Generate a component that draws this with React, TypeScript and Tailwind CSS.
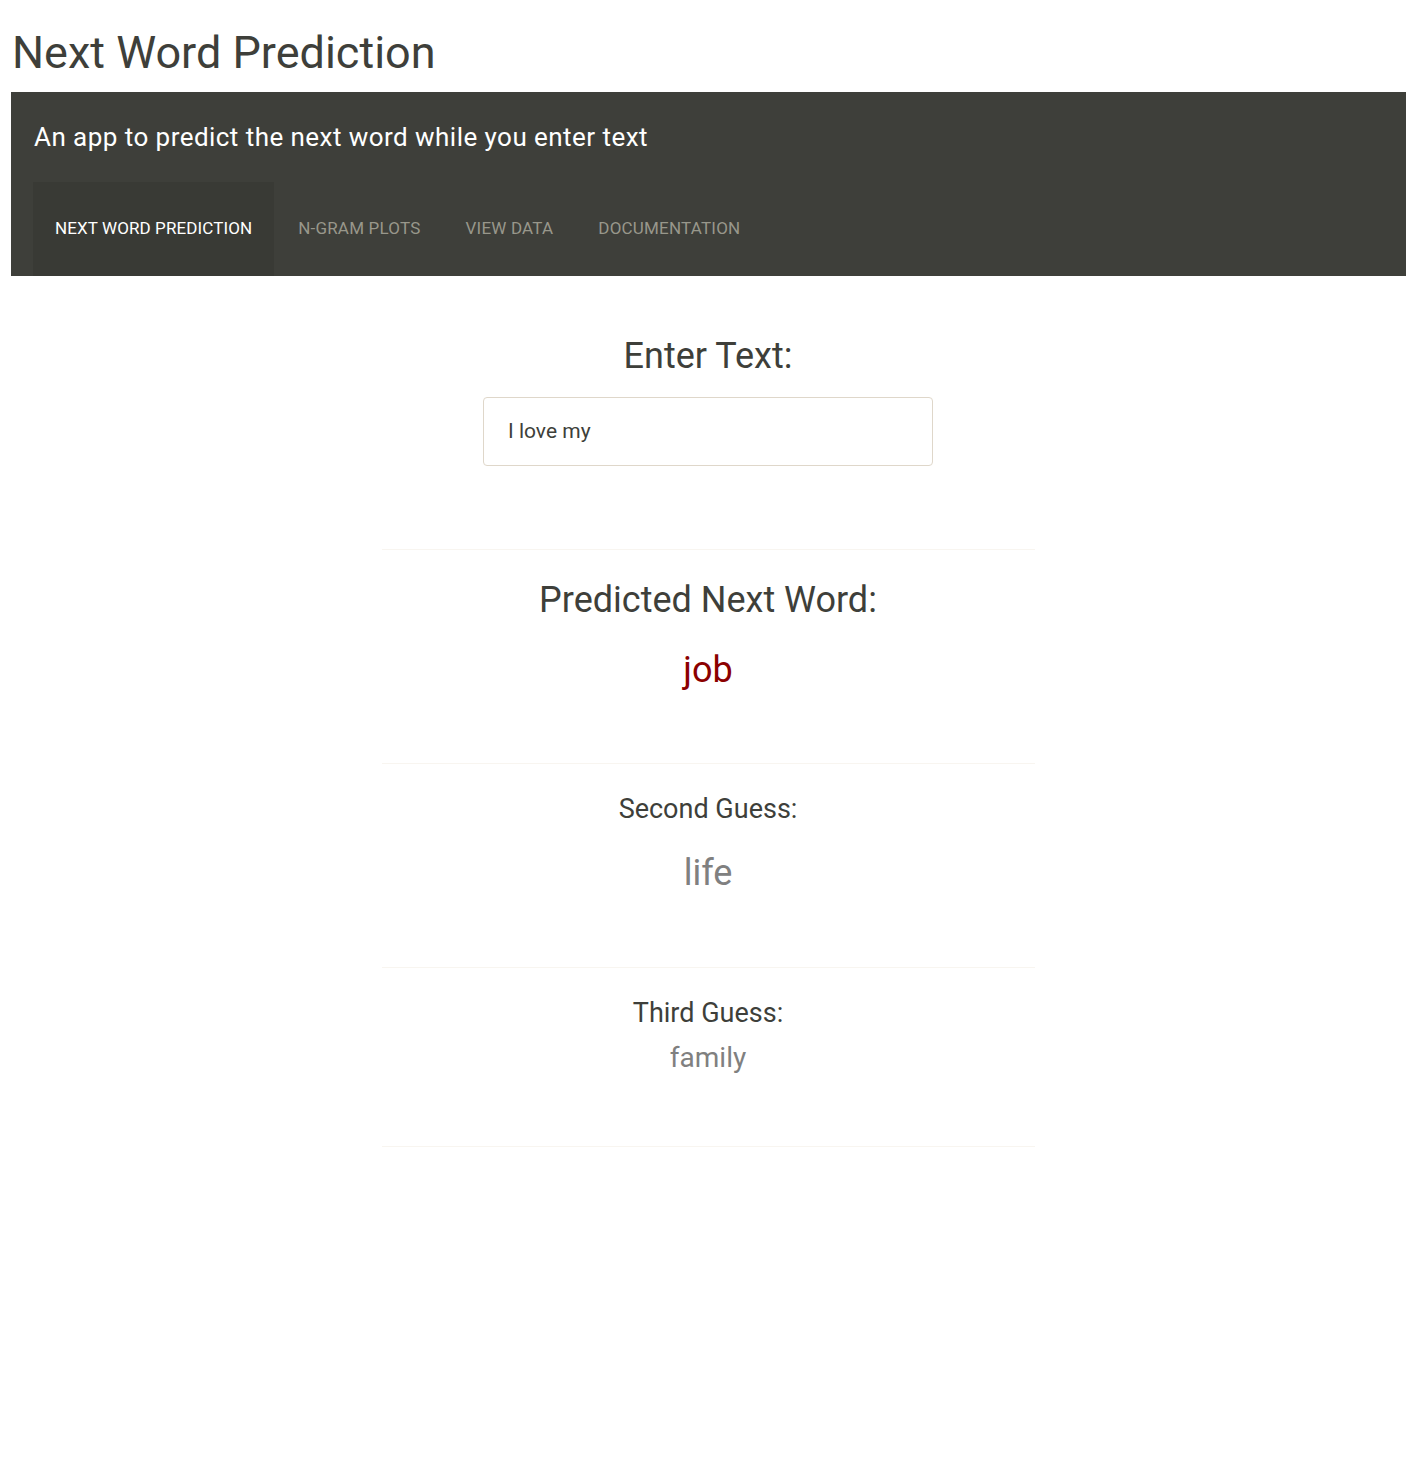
const tabs = ['NEXT WORD PREDICTION', 'N-GRAM PLOTS', 'VIEW DATA', 'DOCUMENTATION']

export default function App() {
  return (
    <div className="min-h-screen bg-white px-[11px] text-[#3e3f3a] [font-family:Roboto,'Liberation_Sans',sans-serif]">
      <h2 className="pt-[24px] pb-[10px] text-[45px] leading-[58px] pl-px">Next Word Prediction</h2>

      <div className="mr-[-1px] bg-[#3e3f3a] pl-[22px]">
        <p className="pt-[28px] pl-[1px] text-[26px] leading-[34px] tracking-[0.45px] text-white">
          An app to predict the next word while you enter text
        </p>
        <nav className="mt-[28px] flex">
          {tabs.map((t, i) => (
            <div
              key={t}
              className={
                i === 0
                  ? 'mr-[1.5px] flex h-[94px] items-center bg-[#393a35] px-[22px] text-[17px] tracking-[0.1px] text-white'
                  : 'flex h-[94px] items-center px-[22.5px] text-[17px] tracking-[0.2px] text-[#98978b]'
              }
            >
              {t}
            </div>
          ))}
        </nav>
      </div>

      <div className="mx-auto w-[653px] text-center">
        <h3 className="mt-[56px] text-[36px] leading-[48px]">Enter Text:</h3>
        <div className="mx-auto mt-[17px] flex h-[69px] w-[450px] items-center rounded-[4px] border border-[#dfd7ca] px-[24px] text-left text-[21px]">
          I love my
        </div>

        <hr className="mt-[83px] border-t border-[#f8f5f0]" />
        <h3 className="mt-[28px] text-[36px] leading-[44px]">Predicted Next Word:</h3>
        <p className="mt-[26px] text-[36px] leading-[44px] text-[#8b0000]">job</p>

        <hr className="mt-[71px] border-t border-[#f8f5f0]" />
        <h4 className="mt-[28px] text-[27px] leading-[34px]">Second Guess:</h4>
        <p className="mt-[25px] text-[36px] leading-[44px] text-[#808080]">life</p>

        <hr className="mt-[72px] border-t border-[#f8f5f0]" />
        <h4 className="mt-[28px] text-[27px] leading-[34px]">Third Guess:</h4>
        <p className="mt-[10px] text-[28px] leading-[36px] text-[#808080]">family</p>

        <hr className="mt-[70px] border-t border-[#f8f5f0]" />
      </div>
    </div>
  )
}
